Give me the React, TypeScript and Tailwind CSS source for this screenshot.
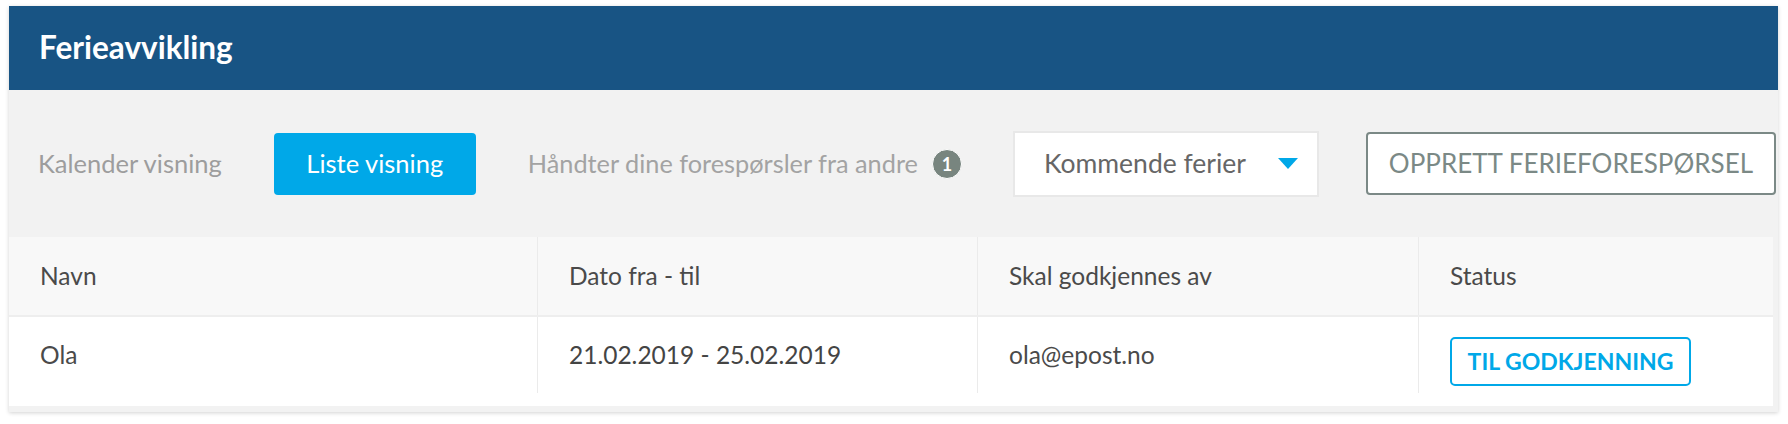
import React from "react";

export default function App() {
  return (
    <div className="min-h-[424px] bg-white pl-[9px] pt-[6px] font-['Lato',sans-serif]">
      <div className="w-[1769px] bg-[#f2f2f2] pb-[6px] shadow-[0_1px_4px_rgba(0,0,0,0.18)]">
        {/* Header */}
        <div className="flex h-[84px] items-center bg-[#185484] pl-[30px]">
          <h1 className="text-[31.5px] font-bold leading-none text-white">Ferieavvikling</h1>
        </div>

        {/* Toolbar */}
        <div className="flex h-[147px] items-center">
          <span className="ml-[29px] text-[25.5px] text-[#9d9d9d]">Kalender visning</span>
          <button className="ml-[52px] flex h-[62px] w-[202px] items-center justify-center rounded-[4px] bg-[#00a8e8] text-[25.5px] text-white">
            Liste visning
          </button>
          <span className="ml-[52px] text-[25.3px] text-[#a3a3a3]">Håndter dine forespørsler fra andre</span>
          <span className="ml-[14px] flex h-[30px] w-[30px] items-center justify-center rounded-full border border-white bg-[#78857f] text-[18px] font-bold leading-none text-white">
            1
          </span>
          <div className="ml-[51px] flex h-[66px] w-[306px] items-center justify-between border-2 border-[#e8e8e8] bg-white pl-[29px] pr-[19px]">
            <span className="text-[26.5px] text-[#666666]">Kommende ferier</span>
            <svg width="20" height="11" viewBox="0 0 20 11">
              <path d="M0 0 H20 L10 11 Z" fill="#00a8e8" />
            </svg>
          </div>
          <button className="ml-[47px] flex h-[63px] w-[410px] items-center justify-center rounded-[4px] border-2 border-[#7b8986] bg-white text-[26px] uppercase text-[#7b8986]">
            Opprett ferieforespørsel
          </button>
        </div>

        {/* Table */}
        <div className="mr-[5px] bg-white pb-[13px] text-[24.5px] text-[#4a4a4a]">
          <div className="grid h-[80px] grid-cols-[528px_440px_441px_1fr] border-b-2 border-[#eeeeee] bg-[#f8f8f8]">
            <div className="flex items-center pl-[31px]">Navn</div>
            <div className="flex items-center border-l border-[#ebebeb] pl-[31px]">Dato fra - til</div>
            <div className="flex items-center border-l border-[#ebebeb] pl-[31px]">Skal godkjennes av</div>
            <div className="flex items-center border-l border-[#ebebeb] pl-[31px]">Status</div>
          </div>
          <div className="grid h-[76px] grid-cols-[528px_440px_441px_1fr]">
            <div className="flex items-center pl-[31px]">Ola</div>
            <div className="flex items-center border-l border-[#ebebeb] pl-[31px] text-[#444444]">21.02.2019 - 25.02.2019</div>
            <div className="flex items-center border-l border-[#ebebeb] pl-[31px]">ola@epost.no</div>
            <div className="flex items-center border-l border-[#ebebeb] pl-[31px]">
              <span className="mt-[12px] flex h-[49px] w-[241px] items-center justify-center rounded-[5px] border-2 border-[#00a8e8] text-[23px] font-bold text-[#00a8e8]">
                TIL GODKJENNING
              </span>
            </div>
          </div>
        </div>
      </div>
    </div>
  );
}
